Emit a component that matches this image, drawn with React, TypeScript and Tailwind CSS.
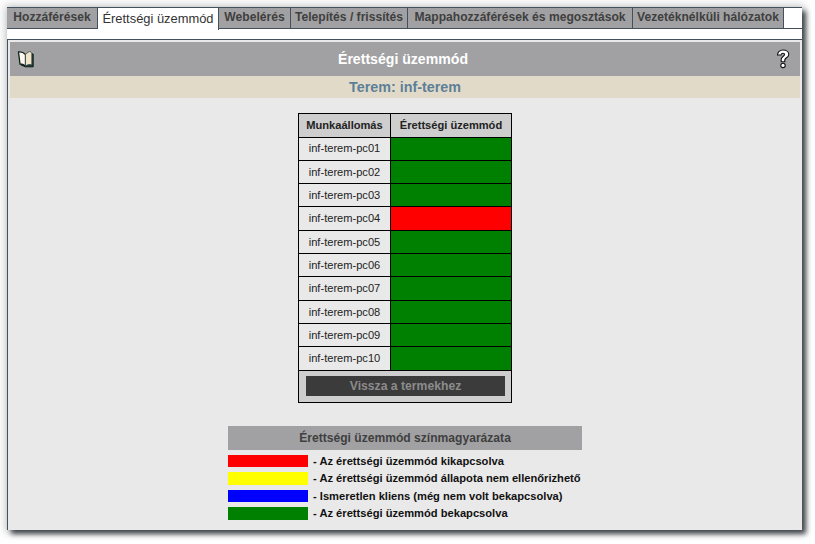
import React from 'react';

const tabs = [
  { label: 'Hozzáférések', width: 'w-[91px]' },
  { label: 'Érettségi üzemmód', width: 'w-[121px]', active: true },
  { label: 'Webelérés', width: 'w-[72px]' },
  { label: 'Telepítés / frissítés', width: 'w-[117px]' },
  { label: 'Mappahozzáférések és megosztások', width: 'w-[225px]' },
  { label: 'Vezetéknélküli hálózatok', width: 'w-[151px]' },
];

const stations = [
  { name: 'inf-terem-pc01', on: true },
  { name: 'inf-terem-pc02', on: true },
  { name: 'inf-terem-pc03', on: true },
  { name: 'inf-terem-pc04', on: false },
  { name: 'inf-terem-pc05', on: true },
  { name: 'inf-terem-pc06', on: true },
  { name: 'inf-terem-pc07', on: true },
  { name: 'inf-terem-pc08', on: true },
  { name: 'inf-terem-pc09', on: true },
  { name: 'inf-terem-pc10', on: true },
];

const legend = [
  { color: 'bg-[#ff0000]', text: '- Az érettségi üzemmód kikapcsolva' },
  { color: 'bg-[#ffff00]', text: '- Az érettségi üzemmód állapota nem ellenőrizhető' },
  { color: 'bg-[#0000ff]', text: '- Ismeretlen kliens (még nem volt bekapcsolva)' },
  { color: 'bg-[#008000]', text: '- Az érettségi üzemmód bekapcsolva' },
];

const BookIcon = () => (
  <svg width="18" height="18" viewBox="0 0 18 18">
    <path d="M13.5 3.5 L16.2 4 L16.2 16.8 L8.5 16.8 L4 15 Z" fill="#1c3a34" stroke="#10201c" strokeWidth="1" />
    <path d="M1.5 2 C4 1.5 6.5 2.5 8.5 4.5 L8.5 16 C6.5 14.5 5 14 3 14 Z" fill="#fbf8ee" stroke="#10201c" strokeWidth="1.3" />
    <path d="M8.5 4.5 C10.5 2.5 12 1.5 13.5 1.5 L14.8 3.5 L14.8 14.8 C12 14.2 10 14.8 8.5 16 Z" fill="#efe4c8" stroke="#3a4a44" strokeWidth="0.8" />
  </svg>
);

const HelpIcon = () => (
  <svg width="14" height="20" viewBox="0 0 14 20">
    <path
      d="M1.5 6 C1.5 3 4 1 7 1 C10.5 1 12.8 3 12.8 5.5 C12.8 8.2 9.6 8.8 8.8 10.6 L8.8 12.8 L5.2 12.8 L5.2 10 C5.6 7.5 8.6 7 8.6 5.5 C8.6 4.6 7.9 4.2 7 4.2 C6 4.2 5.2 4.8 5 6 Z"
      fill="#fff"
      stroke="#111"
      strokeWidth="1.1"
    />
    <circle cx="7" cy="16.4" r="2.2" fill="#fff" stroke="#111" strokeWidth="1.1" />
  </svg>
);

const App: React.FC = () => {
  return (
    <div className="w-[815px] h-[544px] overflow-hidden bg-white pl-[7px] pt-[7px] font-['Liberation_Sans',Arial,sans-serif]">
      <div className="w-[795px] h-[523px] flex flex-col bg-white shadow-[4px_4px_5px_0_rgba(40,45,50,0.85),0_0_8px_2px_rgba(40,45,50,0.25)]">
        {/* Tabs */}
        <div className="flex h-[22px] shrink-0 border-t border-[#44505c]">
          {tabs.map((tab) => (
            <div
              key={tab.label}
              className={
                tab.active
                  ? `${tab.width} shrink-0 h-[22px] bg-white text-center text-[12.9px] leading-[21px] text-[#333333] border-r border-[#44505c]`
                  : `${tab.width} shrink-0 h-[21px] bg-[#a1a1a3] text-center text-[12.1px] font-bold leading-[19px] text-[#3f3f3f] border-r border-b border-[#44505c]`
              }
            >
              {tab.label}
            </div>
          ))}
          <div className="flex-1 h-[21px] border-b border-[#44505c]" />
        </div>

        <div className="h-[10px] shrink-0" />

        {/* Main panel */}
        <div className="flex-1 flex flex-col border-t border-l border-[#44505c] bg-[#e9e9e9] pt-[2px] px-[2px]">
          <div className="flex h-[34px] shrink-0 items-center justify-between bg-[#a1a1a3] pl-[7px] pr-[10px]">
            <BookIcon />
            <span className="pt-[1px] text-[14.1px] font-bold text-white">Érettségi üzemmód</span>
            <div className="flex w-[19px] justify-end">
              <HelpIcon />
            </div>
          </div>
          <div className="h-[22px] shrink-0 bg-[#e2dac8] text-center text-[14.3px] font-bold leading-[22px] text-[#5c7f98]">
            Terem: inf-terem
          </div>

          {/* Station table */}
          <table className="mt-[15px] w-[214px] self-center border-collapse border border-black text-[11.1px] text-[#222222]">
            <thead>
              <tr className="h-[23.6px] bg-[#cecece] font-bold">
                <th className="w-[92px] border border-black p-0 font-bold">Munkaállomás</th>
                <th className="border border-black p-0 font-bold">Érettségi üzemmód</th>
              </tr>
            </thead>
            <tbody>
              {stations.map((s) => (
                <tr key={s.name} className="h-[23.3px]">
                  <td className="border border-black p-0 text-center">{s.name}</td>
                  <td className={`border border-black p-0 ${s.on ? 'bg-[#008000]' : 'bg-[#ff0000]'}`} />
                </tr>
              ))}
              <tr className="bg-[#cecece]">
                <td colSpan={2} className="border border-black pl-[7px] pr-[6px] pt-[5.5px] pb-[5.5px]">
                  <div className="h-[20px] bg-[#3b3b3b] text-center text-[12.2px] font-bold leading-[20px] text-[#8c8c8c]">
                    Vissza a termekhez
                  </div>
                </td>
              </tr>
            </tbody>
          </table>

          {/* Legend */}
          <div className="mt-[23px] w-[354px] self-center">
            <div className="h-[24px] bg-[#a1a1a3] text-center text-[12.1px] font-bold leading-[24px] text-[#3f3f3f]">
              Érettségi üzemmód színmagyarázata
            </div>
            <div className="mt-[5.4px] flex flex-col gap-[4.9px]">
              {legend.map((item) => (
                <div key={item.text} className="flex h-[12.5px] items-center">
                  <div className={`h-[12.5px] w-[80px] shrink-0 ${item.color}`} />
                  <span className="ml-[5px] whitespace-nowrap text-[11.15px] font-bold text-[#111111]">{item.text}</span>
                </div>
              ))}
            </div>
          </div>
        </div>
      </div>
    </div>
  );
};

export default App;
